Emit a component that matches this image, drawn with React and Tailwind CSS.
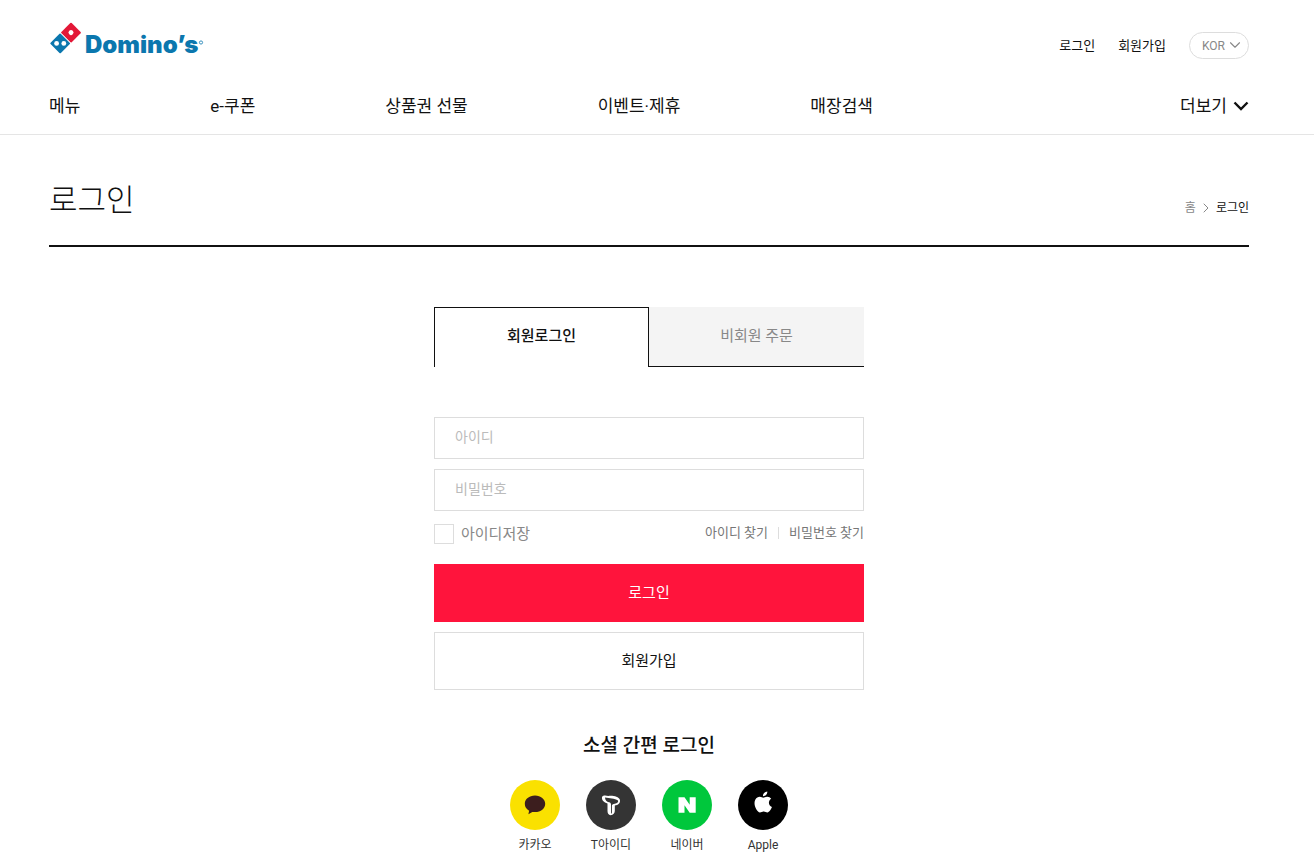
import React, { useState } from 'react';
import { ChevronDown, ChevronRight } from 'lucide-react';

const NAV = ['메뉴', 'e-쿠폰', '상품권 선물', '이벤트·제휴', '매장검색'];

const Logo = () => (
  <svg width="160" height="44" viewBox="0 0 160 44" role="img" aria-label="Domino's">
    <g transform="translate(22 12.6) rotate(45)">
      <rect x="-7.300" y="-7.300" width="14.600" height="14.600" rx="1" fill="#e31837" />
      <circle r="2.500" fill="#fff" />
    </g>
    <g transform="translate(11.2 23.4) rotate(45)">
      <rect x="-7.300" y="-7.300" width="14.600" height="14.600" rx="1" fill="#0b77ae" />
    </g>
    <path d="M11.200 12.600l10.800 10.800" stroke="#fff" strokeWidth="0.8" />
    <circle cx="7.600" cy="23.400" r="2.400" fill="#fff" />
    <circle cx="14.800" cy="23.400" r="2.400" fill="#fff" />
    <text x="36" y="33" className="font-['Inter'] text-[24px] font-black" fill="#0b77ae">
      Domino’s
    </text>
    <circle cx="152" cy="22.500" r="1.600" fill="none" stroke="#0b77ae" strokeWidth="0.8" />
  </svg>
);

const MoreArrow = () => (
  <svg width="16" height="10" viewBox="0 0 16 10" fill="none" stroke="currentColor" strokeWidth="2.4" aria-hidden="true">
    <path d="M1.500 1.500L8 8l6.500-6.500" />
  </svg>
);

const KakaoIcon = () => (
  <svg width="50" height="50" viewBox="0 0 50 50" aria-hidden="true">
    <path
      d="M25 15.500c-5.800 0-10.200 3.600-10.200 8.300 0 3 1.500 5.400 4.300 6.900l-.7 3.600 3.900-2.300c.8.100 1.700.1 2.700.1 5.800 0 10.200-3.700 10.200-8.300S30.800 15.500 25 15.500z"
      fill="#3c1e1e"
    />
  </svg>
);

const TIcon = () => (
  <svg width="50" height="50" viewBox="0 0 50 50" aria-hidden="true">
    <path
      d="M16 17c1.200-2 3.700-1.800 6.300-1 4.500-.6 10.500.6 11.600 3.700.8 3.300-1.900 5.300-5.100 5.900V31c0 2.300-1.600 3.800-4.100 4.300-2.400-.6-3.200-2-3.200-4.300v-7.600c-3.600-.8-6-3.200-5.500-6.400z"
      fill="#fff"
    />
    <path
      d="M19 17.400c4.500 1 9.500.6 13 3.100.6 2.200-1.400 3-4.300 3.400-1.200.2-1.800.9-1.800 2.100v6.500c0 .6-.3 1-.9 1.300v-9c0-1.300-.4-2.200-2-2.500-2.200-.5-4-2.300-4-4.900z"
      fill="#343434"
    />
  </svg>
);

const NaverIcon = () => (
  <svg width="50" height="50" viewBox="0 0 50 50" aria-hidden="true">
    <path d="M16.500 17.300h6l5.200 7.500v-7.500h6v15.500h-6l-5.200-7.500v7.500h-6z" fill="#fff" />
  </svg>
);

const AppleIcon = () => (
  <svg width="50" height="50" viewBox="0 0 50 50" fill="#fff" aria-hidden="true">
    <path d="M29.300 11.500c.2 2.700-1.900 4.800-4.300 4.700-.3-2.400 1.900-4.600 4.300-4.700z" />
    <path d="M25.300 17.700c1 0 2.100-1.100 4-1 1.600.1 3 .8 3.900 2.100-3.400 2.200-2.900 6.800.7 8.200-.8 2.300-2.600 5.300-4.500 5.400-1.400 0-2-.9-3.700-.9s-2.300.9-3.700.9c-3.300-.1-7.300-8.500-4.600-13 1-1.700 2.700-2.700 4.400-2.700 1.600 0 2.500 1 3.500 1z" />
  </svg>
);

const SOCIALS = [
  { name: '카카오', bg: 'bg-[#fae100]', Icon: KakaoIcon },
  { name: 'T아이디', bg: 'bg-[#343434]', Icon: TIcon },
  { name: '네이버', bg: 'bg-[#00c73c]', Icon: NaverIcon },
  { name: 'Apple', bg: 'bg-black', Icon: AppleIcon },
];

const Header = () => (
  <header className="border-b border-[#e5e5e5] pr-4">
    <div className="mx-auto max-w-[1200px]">
      <div className="flex items-start justify-between pt-5">
        <a href="#home"><Logo /></a>
        <div className="mt-3 flex items-center gap-[23px] text-[13px] leading-5 text-[#111]">
          <a href="#login">로그인</a>
          <a href="#join">회원가입</a>
          <div className="relative">
            <select
              aria-label="Language"
              className="block h-[27px] w-[60px] appearance-none rounded-full border border-[#ddd] bg-white pl-3 text-xs text-[#888]"
            >
              <option>KOR</option>
              <option>ENG</option>
            </select>
            <ChevronDown
              size={18}
              strokeWidth={1.5}
              className="pointer-events-none absolute top-1 right-[5px] text-[#888]"
            />
          </div>
        </div>
      </div>
      <nav className="flex items-center justify-between pt-[30px] pb-4 text-[17px] leading-6 text-[#111]">
        <ul className="flex gap-[130px]">
          {NAV.map(item => (
            <li key={item}><a href="#menu">{item}</a></li>
          ))}
        </ul>
        <button className="flex items-center gap-1.5">
          더보기
          <MoreArrow />
        </button>
      </nav>
    </div>
  </header>
);

const Tab = ({ active, onClick, children }) => (
  <button
    role="tab"
    aria-selected={active}
    onClick={onClick}
    className={
      active
        ? 'h-[60px] w-1/2 border border-b-0 border-[#111] pb-0.5 font-medium text-[#111]'
        : 'h-[60px] w-1/2 border-b border-[#111] bg-[#f4f4f4] text-[#888]'
    }
  >
    {children}
  </button>
);

const inputClass =
  'block h-[42px] w-full border border-[#ddd] px-5 pb-0.5 text-sm text-[#111] outline-none placeholder:text-[#bbb]';

const LoginForm = () => {
  const [tab, setTab] = useState('member');

  return (
    <section className="mx-auto mt-[60px] max-w-[430px]">
      <div role="tablist" className="flex text-[15px]">
        <Tab active={tab === 'member'} onClick={() => setTab('member')}>회원로그인</Tab>
        <Tab active={tab === 'guest'} onClick={() => setTab('guest')}>비회원 주문</Tab>
      </div>

      <form className="mt-[50px]" onSubmit={e => e.preventDefault()}>
        <div className="flex flex-col gap-2.5">
          <input type="text" aria-label="아이디" placeholder="아이디" className={inputClass} />
          <input type="password" aria-label="비밀번호" placeholder="비밀번호" className={inputClass} />
        </div>
        <div className="flex items-center justify-between py-3 leading-5 text-[#888]">
          <label className="flex items-center gap-[7px] text-[15px]">
            <input type="checkbox" className="size-5 appearance-none border border-[#ddd] checked:bg-[#111]" />
            아이디저장
          </label>
          <div className="flex items-center pb-0.5 text-[13px] text-[#777]">
            <a href="#find-id">아이디 찾기</a>
            <span className="mx-2.5 h-3 w-px bg-[#ddd]" />
            <a href="#find-pw">비밀번호 찾기</a>
          </div>
        </div>
        <div className="mt-[7px] flex flex-col gap-2.5 text-[15px]">
          <button type="submit" className="h-[58px] bg-[#ff143c] text-white">로그인</button>
          <button type="button" className="h-[58px] border border-[#ddd] text-[#111]">회원가입</button>
        </div>
      </form>
    </section>
  );
};

export default function App() {
  return (
    <div className="min-h-screen bg-white font-['Roboto','Noto_Sans_CJK_KR',sans-serif] text-[#111]">
      <Header />
      <main className="pr-4 pb-10">
        <div className="mx-auto max-w-[1200px]">
          <div className="flex items-end justify-between border-b-2 border-[#111] pt-[42px] pb-5">
            <h1 className="text-[31px] leading-12 font-light">로그인</h1>
            <ol className="flex items-center gap-0.5 pb-[7px] text-xs leading-5">
              <li className="text-[#888]">홈</li>
              <li><ChevronRight size={16} strokeWidth={1.5} className="text-[#888]" /></li>
              <li>로그인</li>
            </ol>
          </div>

          <LoginForm />

          <section className="mt-[42px] flex flex-col items-center">
            <h2 className="text-[19px] leading-7 font-medium">소셜 간편 로그인</h2>
            <ul className="mt-5 flex gap-[26px]">
              {SOCIALS.map(({ name, bg, Icon }) => (
                <li key={name} className="w-[50px]">
                  <a href="#social" className="flex flex-col items-center text-[#333]">
                    <span className={`size-[50px] rounded-full ${bg}`}><Icon /></span>
                    <span className="mt-[5px] text-xs leading-5 whitespace-nowrap">{name}</span>
                  </a>
                </li>
              ))}
            </ul>
          </section>
        </div>
      </main>
    </div>
  );
}
